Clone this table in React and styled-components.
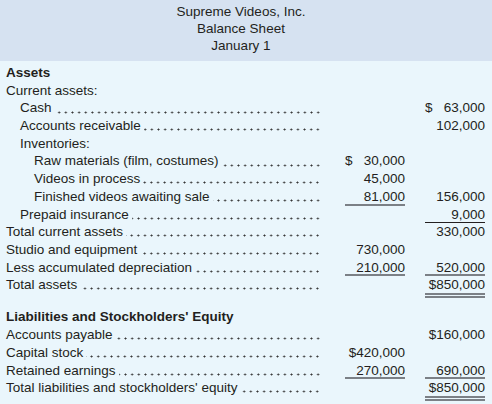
import React from 'react'
import styled, { createGlobalStyle } from 'styled-components'

const GlobalStyle = createGlobalStyle`
  html, body {
    margin: 0;
    padding: 0;
    background: #eaf6fc;
  }
  body {
    font-family: "Liberation Sans", Arial, sans-serif;
    color: #231f20;
  }
`

const Sheet = styled.div`
  width: 492px;
  height: 404px;
  background: #eaf6fc;
  overflow: hidden;
`

const Header = styled.header`
  background: #d6e2f1;
  height: 61px;
  padding: 3px 10px 0 0;
  box-sizing: border-box;
  text-align: center;
  font-size: 13.5px;
  line-height: 17px;
`

const Body = styled.div`
  padding: 3px 7px 0 6px;
`

const Row = styled.div`
  display: grid;
  grid-template-columns: 316px 83px 80px;
  height: 17.7px;
  align-items: start;
  font-size: 13.5px;
  line-height: 17.7px;
  margin-top: ${p => (p.$gap ? '14.5px' : '0')};
`

const Label = styled.div`
  display: flex;
  align-items: stretch;
  height: 17.7px;
  min-width: 0;
  padding-left: ${p => p.$indent * 14}px;
  font-weight: ${p => (p.$bold ? 700 : 400)};
  white-space: nowrap;
`

const Leader = styled.span`
  flex: 1;
  margin-left: 3px;
  margin-right: 1px;
  background-image: radial-gradient(circle, #333 0.8px, transparent 1.2px);
  background-size: 6.65px 3px;
  background-repeat: repeat-x;
  background-position: right 0px bottom 3.5px;
`

const Amount = styled.div`
  justify-self: end;
  width: 60px;
  height: ${p => (p.$line === 'double' ? '17.2px' : '17.7px')};
  box-sizing: ${p => (p.$line === 'double' ? 'content-box' : 'border-box')};
  text-align: right;
  white-space: nowrap;
  line-height: 17.7px;
  border-bottom: ${p =>
    p.$line === 'single'
      ? '2px solid #7b8086'
      : p.$line === 'thin'
      ? '1px solid #231f20'
      : p.$line === 'double'
      ? '5px double #7b8086'
      : 'none'};
`

const Money = styled.span`
  display: flex;
  justify-content: space-between;
`

const Value = ({ v }) => {
  if (!v) return null
  if (v.startsWith('$ ')) {
    return (
      <Money>
        <span>$</span>
        <span>{v.slice(2)}</span>
      </Money>
    )
  }
  return v
}

const rows = [
  { label: 'Assets', bold: true, indent: 0, noDots: true },
  { label: 'Current assets:', indent: 0, noDots: true },
  { label: 'Cash ', indent: 1, b: '$ 63,000' },
  { label: 'Accounts receivable', indent: 1, b: '102,000' },
  { label: 'Inventories:', indent: 1, noDots: true },
  { label: 'Raw materials (film, costumes) ', indent: 2, a: '$ 30,000' },
  { label: 'Videos in process', indent: 2, a: '45,000' },
  { label: 'Finished videos awaiting sale', indent: 2, a: '81,000', aLine: 'single', b: '156,000' },
  { label: 'Prepaid insurance', indent: 1, b: '9,000', bLine: 'thin' },
  { label: 'Total current assets', indent: 0, b: '330,000' },
  { label: 'Studio and equipment ', indent: 0, a: '730,000' },
  { label: 'Less accumulated depreciation ', indent: 0, a: '210,000', aLine: 'single', b: '520,000', bLine: 'single' },
  { label: 'Total assets', indent: 0, b: '$850,000', bLine: 'double' },
  { label: "Liabilities and Stockholders' Equity", bold: true, indent: 0, noDots: true, gap: true },
  { label: 'Accounts payable ', indent: 0, b: '$160,000' },
  { label: 'Capital stock', indent: 0, a: '$420,000' },
  { label: 'Retained earnings', indent: 0, a: '270,000', aLine: 'single', b: '690,000', bLine: 'single' },
  { label: "Total liabilities and stockholders' equity ", indent: 0, b: '$850,000', bLine: 'double' },
]

export default function App() {
  return (
    <>
      <GlobalStyle />
      <Sheet>
        <Header>
          <div>Supreme Videos, Inc.</div>
          <div>Balance Sheet</div>
          <div>January 1</div>
        </Header>
        <Body>
          {rows.map(r => (
            <Row key={r.label} $gap={r.gap}>
              <Label $indent={r.indent} $bold={r.bold}>
                <span>{r.label}</span>
                {!r.noDots && <Leader />}
              </Label>
              <Amount $line={r.a ? r.aLine : undefined}>
                <Value v={r.a} />
              </Amount>
              <Amount $line={r.b ? r.bLine : undefined}>
                <Value v={r.b} />
              </Amount>
            </Row>
          ))}
        </Body>
      </Sheet>
    </>
  )
}
